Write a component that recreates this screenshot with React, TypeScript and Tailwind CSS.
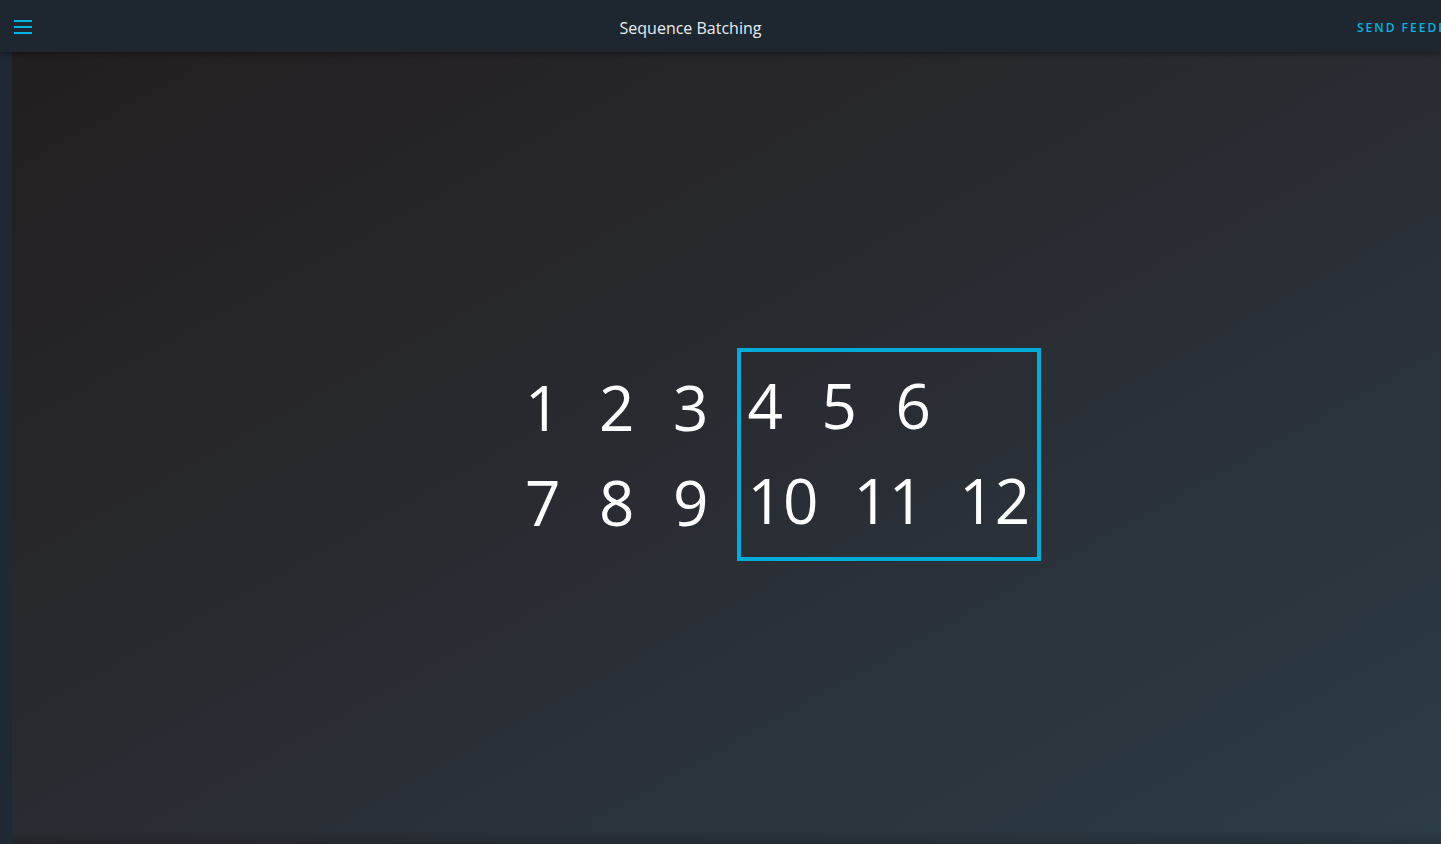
const rows = [
  { left: ['1', '2', '3'], right: ['4', '5', '6'], gap: 'gap-[38.5px]' },
  { left: ['7', '8', '9'], right: ['10', '11', '12'], gap: 'gap-[35px]' },
];

const font = { fontFamily: '"Open Sans", "Noto Sans", sans-serif' };

function Header() {
  return (
    <header className="relative z-10 flex h-[52px] items-center bg-[#1e2630] shadow-[0_2px_4px_rgba(0,0,0,0.35)]">
      <div className="flex w-[46px] shrink-0 items-center pl-[14px]">
        <div className="flex w-[18px] flex-col gap-[4px] pt-[1px]">
          <span className="h-[2px] bg-[#02b3e4]" />
          <span className="h-[2px] bg-[#02b3e4]" />
          <span className="h-[2px] bg-[#02b3e4]" />
        </div>
      </div>
      <h1 className="flex-1 text-center text-[16px] text-[#e9eef2] pt-[4px]">Sequence Batching</h1>
      <div className="w-[106px] shrink-0 whitespace-nowrap pl-[22px] pt-[4px] text-[12px] font-semibold uppercase tracking-[2px] text-[#02b3e4]">
        Send Feedback
      </div>
    </header>
  );
}

export default function App() {
  return (
    <div className="h-[844px] w-[1441px] overflow-hidden bg-[#1e2a35] text-white" style={font}>
      <Header />
      <div className="flex h-[792px]">
        <div className="w-[12px] shrink-0 bg-[#1e2935]" />
        <main className="relative flex flex-1 items-center bg-gradient-to-br from-[#221e1f] via-[#292c32] to-[#2c3c47] pl-[513px] pt-[13px]">
          <div className="flex items-center text-[62px] leading-[95px]">
            <div className="flex flex-col">
              {rows.map((r, i) => (
                <div key={i} className="flex gap-[38.5px]">
                  {r.left.map((n) => (
                    <span key={n} className="w-[35.5px]">{n}</span>
                  ))}
                </div>
              ))}
            </div>
            <div className="ml-[28px] flex flex-col border-[4px] border-[#02acd8] pb-[9px] pl-[7px] pr-[7px] pt-[6px]">
              {rows.map((r, i) => (
                <div key={i} className={`flex ${r.gap}`}>
                  {r.right.map((n) => (
                    <span key={n}>{n}</span>
                  ))}
                </div>
              ))}
            </div>
          </div>
          <div className="pointer-events-none absolute inset-x-0 bottom-0 h-[14px] bg-gradient-to-b from-transparent to-[rgba(0,0,0,0.18)]" />
        </main>
      </div>
    </div>
  );
}
